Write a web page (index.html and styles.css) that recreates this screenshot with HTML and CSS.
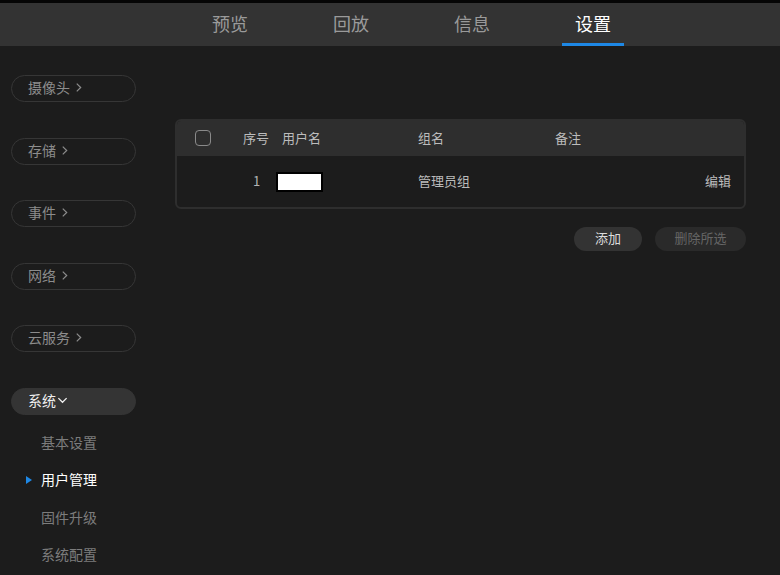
FILE: index.html
```html
<!DOCTYPE html>
<html>
<head>
    <meta charset="utf-8" />
    <title>设置</title>
    <link rel="stylesheet" href="styles.css">
</head>
<body>
    <div class="topline"></div>
    <div class="nav">
        <div class="tab">预览</div>
        <div class="tab">回放</div>
        <div class="tab">信息</div>
        <div class="tab active">设置</div>
    </div>
    <div class="page">
        <div class="side">
            <div class="pill">摄像头 <svg class="chev" viewBox="0 0 8 12"><path d="M2 1.5 L6.5 6 L2 10.5" /></svg></div>
            <div class="pill">存储 <svg class="chev" viewBox="0 0 8 12"><path d="M2 1.5 L6.5 6 L2 10.5" /></svg></div>
            <div class="pill">事件 <svg class="chev" viewBox="0 0 8 12"><path d="M2 1.5 L6.5 6 L2 10.5" /></svg></div>
            <div class="pill">网络 <svg class="chev" viewBox="0 0 8 12"><path d="M2 1.5 L6.5 6 L2 10.5" /></svg></div>
            <div class="pill">云服务 <svg class="chev" viewBox="0 0 8 12"><path d="M2 1.5 L6.5 6 L2 10.5" /></svg></div>
            <div class="pill open">系统<svg class="chevdown" viewBox="0 0 12 8"><path d="M1.5 2 L6 6.5 L10.5 2" /></svg></div>
            <div class="sub">
                <div class="subitem">基本设置</div>
                <div class="subitem current">用户管理</div>
                <div class="subitem">固件升级</div>
                <div class="subitem">系统配置</div>
            </div>
        </div>
        <div class="main">
            <div class="table">
                <div class="row head">
                    <div class="cell"><span class="check"></span></div>
                    <div class="cell">序号</div>
                    <div class="cell">用户名</div>
                    <div class="cell">组名</div>
                    <div class="cell">备注</div>
                    <div class="cell"></div>
                </div>
                <div class="row body">
                    <div class="cell"></div>
                    <div class="cell num">1</div>
                    <div class="cell"><span class="namebox"></span></div>
                    <div class="cell">管理员组</div>
                    <div class="cell"></div>
                    <div class="cell edit">编辑</div>
                </div>
            </div>
            <div class="actions">
                <div class="btn">添加</div>
                <div class="btn disabled">删除所选</div>
            </div>
        </div>
    </div>
</body>
</html>
```

FILE: styles.css
```css
* {
    margin: 0;
    padding: 0;
    box-sizing: border-box;
}

body {
    background: #1c1c1c;
    font-family: "Noto Sans CJK SC", "Noto Sans", sans-serif;
    color: #bbb;
    height: 575px;
    overflow: hidden;
}

.topline {
    height: 3px;
    background: #050505;
}

.nav {
    height: 43px;
    background: #333;
    display: flex;
    padding-left: 199px;
    gap: 59px;
}

.tab {
    width: 62px;
    text-align: center;
    font-size: 18px;
    line-height: 40px;
    color: #9a9a9a;
    border-bottom: 3px solid transparent;
}

.tab.active {
    color: #fff;
    border-bottom-color: #1e88e5;
}

.page {
    display: flex;
}

.side {
    width: 175px;
    padding-top: 29px;
    padding-left: 11px;
}

.pill {
    width: 125px;
    height: 27px;
    border: 1px solid #363636;
    border-radius: 14px;
    padding-left: 16px;
    padding-bottom: 2px;
    font-size: 14px;
    line-height: 23px;
    color: #8c8c8c;
    margin-bottom: 35.5px;
    display: flex;
    align-items: center;
}

.chev {
    width: 7px;
    height: 11px;
    margin-left: 5px;
    fill: none;
    stroke: #8c8c8c;
    stroke-width: 1.4;
}

.pill.open {
    background: #343434;
    border-color: #343434;
    color: #f0f0f0;
    margin-bottom: 10px;
}

.chevdown {
    width: 11px;
    height: 8px;
    margin-left: 1px;
    fill: none;
    stroke: #f0f0f0;
    stroke-width: 1.4;
}

.sub {
    display: flex;
    flex-direction: column;
}

.subitem {
    height: 37.5px;
    line-height: 35.5px;
    padding-left: 30px;
    font-size: 14px;
    color: #7c7c7c;
    position: relative;
}

.subitem.current {
    color: #fff;
}

.subitem.current::before {
    content: "";
    position: absolute;
    left: 15px;
    top: 14px;
    border-left: 6px solid #1e88e5;
    border-top: 4px solid transparent;
    border-bottom: 4px solid transparent;
}

.main {
    width: 571px;
    padding-top: 73px;
}

.table {
    border: 2px solid #2e2e2e;
    border-radius: 6px;
    overflow: hidden;
}

.row {
    display: grid;
    grid-template-columns: 66px 39px 136px 137px 1fr 60px;
    align-items: center;
    font-size: 13px;
}

.row.head {
    height: 35px;
    padding-bottom: 2px;
    background: #2e2e2e;
    color: #bcbcbc;
}

.row.body {
    height: 51px;
    padding-bottom: 3px;
    color: #bbb;
}

.check {
    display: block;
    width: 16px;
    height: 16px;
    margin-left: 18px;
    margin-top: 1px;
    border: 1.5px solid #8a8a8a;
    border-radius: 4px;
}

.num {
    padding-left: 10px;
    color: #b4b4b4;
}

.namebox {
    display: block;
    width: 47px;
    height: 20px;
    margin-left: -6px;
    margin-top: 3px;
    background: #fff;
    border: 2px solid #000;
}

.edit {
    text-align: right;
    padding-right: 13px;
}

.actions {
    display: flex;
    justify-content: flex-end;
    gap: 13px;
    margin-top: 18px;
}

.btn {
    height: 24px;
    line-height: 22px;
    border-radius: 12px;
    background: #333;
    color: #dcdcdc;
    font-size: 13px;
    text-align: center;
    width: 68px;
}

.btn.disabled {
    width: 91px;
    background: #2a2a2a;
    color: #666;
}
```
